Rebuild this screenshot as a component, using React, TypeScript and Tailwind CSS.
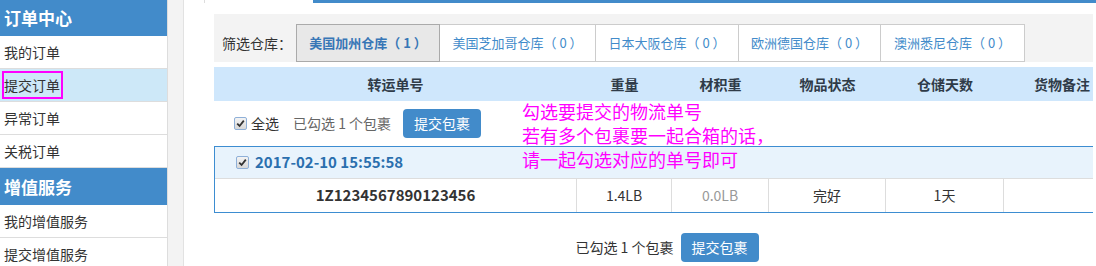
import React from "react";

const sideOrders = ["我的订单", "提交订单", "异常订单", "关税订单"];
const sideServices = ["我的增值服务", "提交增值服务"];

const warehouses = [
  { name: "美国加州仓库", count: 1, w: "w-[144px]" },
  { name: "美国芝加哥仓库", count: 0, w: "w-[156px]" },
  { name: "日本大阪仓库", count: 0, w: "w-[143px]" },
  { name: "欧洲德国仓库", count: 0, w: "w-[142px]" },
  { name: "澳洲悉尼仓库", count: 0, w: "w-[144px]" },
];

const columns = [
  { title: "转运单号", w: "w-[363px]" },
  { title: "重量", w: "w-[95px]" },
  { title: "材积重", w: "w-[97px]" },
  { title: "物品状态", w: "w-[117px]" },
  { title: "仓储天数", w: "w-[118px]" },
  { title: "货物备注", w: "w-[116px]" },
];

function CheckBox() {
  return (
    <span className="inline-flex items-center justify-center w-[13px] h-[13px] rounded-[2px] border border-[#8fb0d8] bg-gradient-to-b from-[#f4f4f4] to-[#d8d8d8] shrink-0">
      <svg width="9" height="9" viewBox="0 0 9 9">
        <path d="M1.2 4.6 L3.6 7 L7.8 1.6" fill="none" stroke="#333" strokeWidth="1.8" />
      </svg>
    </span>
  );
}

export default function App() {
  return (
    <div className="w-[1096px] h-[266px] overflow-hidden flex bg-white text-[#333] font-['Noto_Sans_CJK_SC','Noto_Sans',sans-serif]">
      {/* 侧边栏 */}
      <aside className="w-[168px] shrink-0 border-r border-[#ddd] bg-white">
        <div className="h-[36px] bg-[#428bca] text-white font-bold text-[17px] leading-[36px] pl-[4px]">订单中心</div>
        {sideOrders.map((item) => (
          <div
            key={item}
            className={`h-[33px] border-b border-[#ddd] text-[14px] flex items-center ${
              item === "提交订单" ? "bg-[#cde8f8]" : ""
            }`}
          >
            {item === "提交订单" ? (
              <span className="ml-[2px] border-2 border-[#f0f] leading-[24px] pr-[1px]">{item}</span>
            ) : (
              <span className="pl-[4px]">{item}</span>
            )}
          </div>
        ))}
        <div className="h-[37px] bg-[#428bca] text-white font-bold text-[17px] leading-[37px] pl-[4px]">增值服务</div>
        {sideServices.map((item) => (
          <div key={item} className="h-[33px] border-b border-[#ddd] text-[14px] flex items-center pl-[4px]">
            {item}
          </div>
        ))}
      </aside>
      <div className="w-[16px] shrink-0 bg-[#f3f3f3] border-r border-[#e2e2e2]" />

      {/* 主体 */}
      <main className="relative flex-1">
        <div className="flex h-[3px]">
          <div className="w-[20px]" />
          <div className="w-[109px] border-l border-[#ddd]" />
          <div className="flex-1 bg-[#428bca]" />
        </div>

        <div className="ml-[30px] w-[879px] overflow-hidden mt-[11px]">
          {/* 筛选仓库 */}
          <div className="h-[48px] bg-[#f3f3f3] flex items-end">
            <div className="w-[82px] h-[38px] flex items-center pl-[8px] text-[14px]">筛选仓库：</div>
            {warehouses.map((w, i) => (
              <div
                key={w.name}
                className={`${w.w} h-[38px] flex items-center justify-center text-[13px] border whitespace-pre ${
                  i === 0
                    ? "bg-[#e8e8e8] border-[#aaa] text-[#3776b6] font-bold"
                    : "bg-white border-[#ccc] border-l-0 text-[#428bca]"
                }`}
              >
                {w.name}（ {w.count} ）
              </div>
            ))}
          </div>

          <div className="w-[906px] mt-[5px]">
            {/* 表头 */}
            <div className="flex h-[34px] bg-[#cfe7fc]">
              {columns.map((c) => (
                <div key={c.title} className={`${c.w} flex items-center justify-center text-[14px] font-bold text-[#2f3b48]`}>
                  {c.title}
                </div>
              ))}
            </div>

            {/* 全选 */}
            <div className="h-[45px] flex items-center pl-[20px] text-[14px]">
              <CheckBox />
              <span className="ml-[4px]">全选</span>
              <span className="ml-[14px] text-[#666]">已勾选 1 个包裹</span>
              <button className="ml-[12px] w-[78px] h-[29px] rounded-[4px] bg-[#428bca] text-white text-[14px]">提交包裹</button>
            </div>

            {/* 包裹 */}
            <div className="border border-[#3d8dd1]">
              <div className="h-[32px] bg-[#e8f3fc] border-b border-[#ddd] flex items-center pl-[21px]">
                <CheckBox />
                <span className="ml-[6px] text-[15px] font-bold text-[#2a6fae]">2017-02-10 15:55:58</span>
              </div>
              <div className="flex h-[33px] text-[14px]">
                <div className="w-[362px] flex items-center justify-center font-bold text-[15px] border-r border-[#ddd]">1Z1234567890123456</div>
                <div className="w-[95px] flex items-center justify-center border-r border-[#ddd]">1.4LB</div>
                <div className="w-[97px] flex items-center justify-center border-r border-[#ddd] text-[#999]">0.0LB</div>
                <div className="w-[117px] flex items-center justify-center border-r border-[#ddd]">完好</div>
                <div className="w-[118px] flex items-center justify-center border-r border-[#ddd]">1天</div>
                <div className="flex-1" />
              </div>
            </div>

            {/* 底部 */}
            <div className="mt-[20px] flex items-center justify-center text-[14px]">
              <span>已勾选 1 个包裹</span>
              <button className="ml-[7px] w-[78px] h-[29px] rounded-[4px] bg-[#428bca] text-white text-[14px]">提交包裹</button>
            </div>
          </div>
        </div>

        {/* 标注 */}
        <div className="absolute left-[338px] top-[99px] text-[18px] leading-[24px] text-[#f0f]">
          <div>勾选要提交的物流单号</div>
          <div>若有多个包裹要一起合箱的话，</div>
          <div>请一起勾选对应的单号即可</div>
        </div>
      </main>
    </div>
  );
}
